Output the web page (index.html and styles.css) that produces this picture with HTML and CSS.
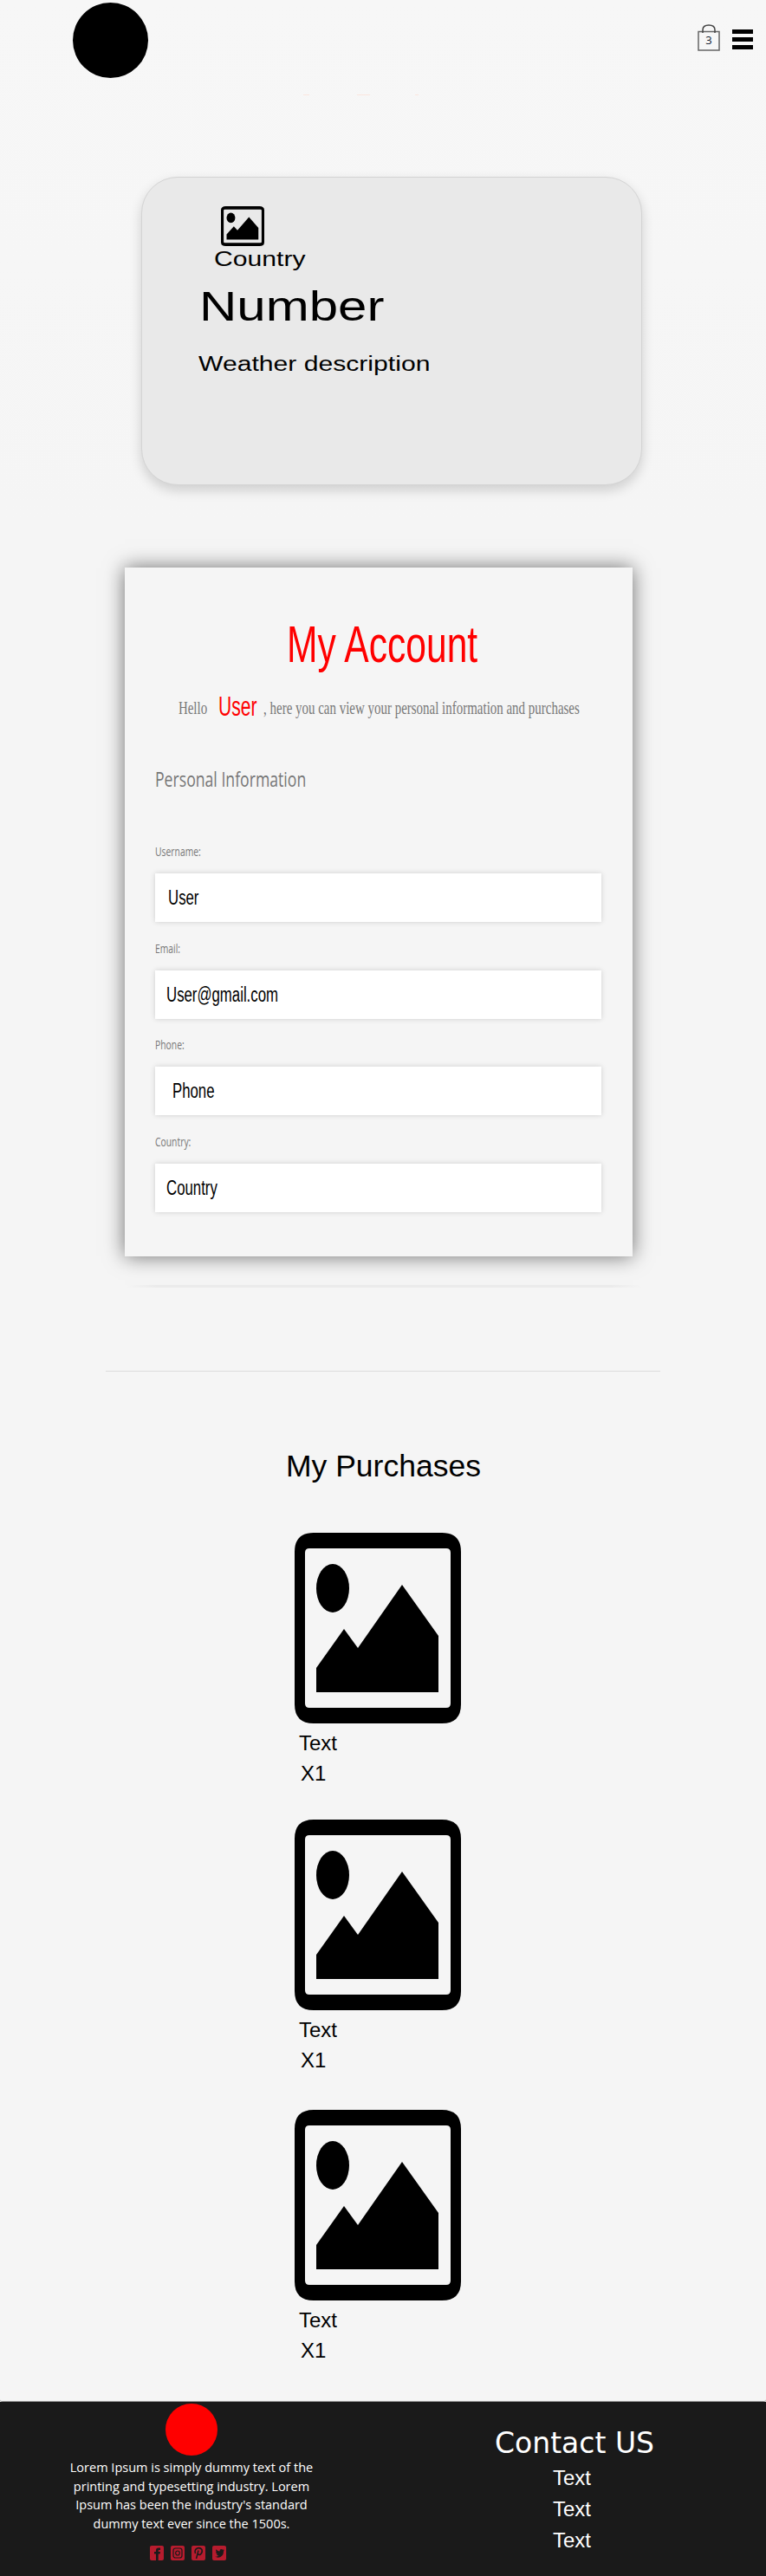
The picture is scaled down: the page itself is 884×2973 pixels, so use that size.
FILE: index.html
```html
<!DOCTYPE html>
<html lang="en">
<head>
<meta charset="utf-8">
<title>My Account</title>
<link rel="stylesheet" href="styles.css">
</head>
<body>
<svg class="defs" width="0" height="0" aria-hidden="true">
  <symbol id="pic" viewBox="0 0 192 220" preserveAspectRatio="none">
    <path fill-rule="evenodd" d="M22 0H170Q192 0 192 22V198Q192 220 170 220H22Q0 220 0 198V22Q0 0 22 0ZM17 18Q12 18 12 23V197Q12 202 17 202H175Q180 202 180 197V23Q180 18 175 18Z"/>
    <ellipse cx="44" cy="64" rx="19" ry="28"/>
    <path d="M25 184V156L57 111L73 133L124 60L166 119V184Z"/>
  </symbol>
</svg>
<div class="page">
  <header class="header">
    <div class="header-row">
      <div class="logo"></div>
      <div class="tools">
        <div class="bag">
          <svg class="bag-svg" viewBox="0 0 26 31"><path d="M1 8.500H25V30H1Z" fill="none" stroke="#666" stroke-width="1.500"/><path d="M6 10V6.500Q6 1 13 1T20 6.500V10" fill="none" stroke="#444" stroke-width="1.500"/></svg>
          <span class="bag-count">3</span>
        </div>
        <div class="burger"><i></i><i></i><i></i></div>
      </div>
    </div>
    <div class="marks"><i class="m1"></i><i class="m2"></i><i class="m3"></i></div>
  </header>

  <section class="weather">
    <svg class="weather-icon"><use href="#pic"/></svg>
    <div class="w-country"><span>Country</span></div>
    <div class="w-number"><span>Number</span></div>
    <div class="w-desc"><span>Weather description</span></div>
  </section>

  <section class="account">
    <h1 class="acc-title"><span>My Account</span></h1>
    <p class="acc-hello"><span class="hello-inner">Hello<b>User</b>, here you can view your personal information and purchases</span></p>
    <h2 class="acc-sub"><span>Personal Information</span></h2>
    <div class="field">
      <label class="f-label"><span>Username:</span></label>
      <div class="f-box f-user"><span>User</span></div>
    </div>
    <div class="field">
      <label class="f-label"><span>Email:</span></label>
      <div class="f-box f-email"><span>User@gmail.com</span></div>
    </div>
    <div class="field">
      <label class="f-label"><span>Phone:</span></label>
      <div class="f-box f-phone"><span>Phone</span></div>
    </div>
    <div class="field">
      <label class="f-label"><span>Country:</span></label>
      <div class="f-box f-email"><span>Country</span></div>
    </div>
  </section>
  <div class="band"></div>
  <hr class="rule">

  <section class="purchases">
    <h2 class="pur-title">My Purchases</h2>
    <article class="item">
      <svg class="item-pic"><use href="#pic"/></svg>
      <div class="item-name">Text</div>
      <div class="item-qty">X1</div>
    </article>
    <article class="item item-tall">
      <svg class="item-pic"><use href="#pic"/></svg>
      <div class="item-name">Text</div>
      <div class="item-qty">X1</div>
    </article>
    <article class="item">
      <svg class="item-pic"><use href="#pic"/></svg>
      <div class="item-name">Text</div>
      <div class="item-qty">X1</div>
    </article>
  </section>
</div>

<footer class="footer">
  <div class="foot-left">
    <div class="foot-logo"></div>
    <p class="foot-text"><span>Lorem Ipsum is simply dummy text of the<br>printing and typesetting industry. Lorem<br>Ipsum has been the industry's standard<br>dummy text ever since the 1500s.</span></p>
    <div class="social">
      <svg viewBox="0 0 16 17"><rect width="16" height="17" rx="2" fill="#b71c2e"/><path d="M7 17V9.500H5V7H7V5Q7 2.500 10 2.500H12V5H10.500Q9.700 5 9.700 5.800V7H12L11.600 9.500H9.700V17Z" fill="#1a1a1a"/></svg>
      <svg viewBox="0 0 16 17"><rect width="16" height="17" rx="2" fill="#b71c2e"/><rect x="3" y="3" width="10" height="11" rx="2.500" fill="none" stroke="#1a1a1a" stroke-width="1.200"/><ellipse cx="8" cy="8.500" rx="2.300" ry="2.500" fill="none" stroke="#1a1a1a" stroke-width="1.200"/></svg>
      <svg viewBox="0 0 16 17"><rect width="16" height="17" rx="2" fill="#b71c2e"/><path d="M4.500 9Q3 5 6.500 3Q10 1.800 12 4.500Q13 8 10.500 10Q8.500 11 7.600 9.500M8 5.500L5.500 15" fill="none" stroke="#1a1a1a" stroke-width="1.500"/></svg>
      <svg viewBox="0 0 16 17"><rect width="16" height="17" rx="2" fill="#b71c2e"/><path d="M3 12.500Q6 13 7.500 11.500Q5.500 11.500 5 10H6Q4 9 4 7.200L5 7.500Q3.500 6 4.500 4.200Q6.500 6.500 8.500 6.500Q8.300 4 10.500 4Q11.500 4 12 4.700L13.500 4.200L12.700 5.500L14 5.200L13 6.500Q13 11 9.500 13Q6 14.500 3 12.500Z" fill="#1a1a1a"/></svg>
    </div>
  </div>
  <div class="foot-right">
    <h3 class="foot-title">Contact US</h3>
    <div class="foot-link"><span>Text</span></div>
    <div class="foot-link"><span>Text</span></div>
    <div class="foot-link"><span>Text</span></div>
  </div>
</footer>
</body>
</html>
```
FILE: styles.css
```css
* { box-sizing: border-box; }
html, body { margin: 0; padding: 0; }
body { background: #f5f5f5; font-family: "Liberation Sans", Arial, sans-serif; color: #000; width: 884px; }
.defs { display: block; height: 0; }
.page { height: 2772px; overflow: hidden; background: linear-gradient(180deg, #f7f7f7, #f5f5f5 600px); border-radius: 0 0 3px 3px; border-bottom: 1px solid #999; }

.header { height: 204px; }
.header-row { height: 109px; padding: 3px 15px 0 84px; display: flex; justify-content: space-between; align-items: flex-start; }
.logo { width: 87px; height: 87px; border-radius: 50%; background: #000; }
.tools { display: flex; gap: 14px; margin-top: 25px; }
.bag { position: relative; width: 26px; height: 31px; }
.bag-svg { display: block; width: 26px; height: 31px; }
.bag-count { position: absolute; left: 0; right: 0; top: 9px; text-align: center; font: 13px/18px "Open Sans", sans-serif; color: #123; }
.burger { width: 24px; display: flex; flex-direction: column; gap: 4.500px; margin-top: 6px; }
.burger i { display: block; height: 4.500px; background: #000; }
.marks { display: flex; padding-left: 350px; }
.marks i { display: block; height: 1px; background: #fbe6df; }
.m1 { width: 7px; }
.m2 { width: 15px; margin-left: 55px; }
.m3 { width: 4px; margin-left: 52px; }

.weather { margin-left: 163px; width: 578px; height: 356px; border-radius: 42px; background: #e9e9e9; border: 1px solid #d4d4d4; box-shadow: 0 6px 14px rgba(0,0,0,.16); padding: 33px 0 0 91px; }
.weather-icon { display: block; width: 50px; height: 46px; }
.weather span, .acc-title span, .acc-sub span, .f-label span, .f-box span, .foot-text span, .foot-link span { display: inline-block; white-space: nowrap; }
.w-country { font-size: 23px; line-height: 26px; margin: 2px 0 0 -8px; }
.w-country span { transform: scaleX(1.31); transform-origin: left; }
.w-number { font-size: 48px; line-height: 52px; margin: 16px 0 0 -25px; }
.w-number span { transform: scaleX(1.25); transform-origin: left; }
.w-desc { font-size: 23px; line-height: 26px; margin: 27px 0 0 -26px; }
.w-desc span { transform: scaleX(1.31); transform-origin: left; }

.account { margin: 95px 0 0 144px; width: 586px; height: 795px; background: #f5f5f5; box-shadow: 0 0 22px rgba(0,0,0,.55); padding: 54px 35px 0; }
.acc-title { margin: 0 0 0 9px; font-weight: 400; font-size: 60px; line-height: 70px; color: #f00; text-align: center; }
.acc-title span { transform: scaleX(.71); }
.acc-hello { margin: 19px 0 0 -35px; width: 586px; text-align: center; font: 22px/36px "Liberation Serif", serif; color: #777; white-space: nowrap; height: 36px; display: flex; justify-content: center; }
.hello-inner { display: inline-block; transform: scaleX(.68); }
.hello-inner b { font: 400 31px/36px "Liberation Sans", sans-serif; color: #f00; margin: 0 11px 0 19px; vertical-align: -2px; }
.acc-sub { margin: 49px 0 0; font: 400 24px/32px "Open Sans", sans-serif; color: #777; }
.acc-sub span { transform: scaleX(.735); transform-origin: left; }
.field { width: 515px; }
.acc-sub + .field { margin-top: 58px; }
.f-label { display: block; font: 14px/20px "Open Sans", sans-serif; color: #777; margin-bottom: 15px; }
.f-label span { transform: scaleX(.74); transform-origin: left; }
.f-box { height: 56px; background: #fff; box-shadow: 0 0 6px rgba(0,0,0,.16); font-size: 23px; line-height: 56px; margin-bottom: 20.500px; }
.f-box span { transform: scaleX(.73); transform-origin: left; }
.f-user { padding-left: 15px; }
.f-email { padding-left: 12.500px; }
.f-phone { padding-left: 20px; }

.band { width: 596px; height: 3px; margin: 33px 0 0 145px; background: linear-gradient(90deg, #f5f5f5, #ebebeb 6%, #ebebeb 94%, #f5f5f5); }
.rule { width: 640px; height: 1px; margin: 96px 0 0 122px; border: 0; background: #dcdcdc; }

.purchases { padding-left: 340px; }
.pur-title { margin: 88px 0 0 -10px; font-weight: 400; font-size: 35.500px; line-height: 42px; width: 226px; white-space: nowrap; }
.item { height: 331px; }
.item-tall { height: 335px; }
.item-pic { display: block; width: 192px; height: 220px; }
.pur-title + .item { margin-top: 56px; }
.item-name { font-size: 24px; line-height: 28px; margin: 9px 0 0 5px; }
.item-qty { font-size: 24px; line-height: 28px; margin: 7px 0 0 7px; }

.footer { height: 201px; background: #1a1a1a; color: #fff; display: flex; }
.foot-left { width: 442px; display: flex; flex-direction: column; align-items: center; padding-top: 2px; }
.foot-logo { width: 60px; height: 60px; border-radius: 50%; background: #f00; }
.foot-text { margin: 3px 0 0; font: 14.500px/21.500px "Open Sans", sans-serif; text-align: center; }
.social { display: flex; gap: 8px; margin: 15px 8px 0 0; }
.social svg { display: block; width: 16px; height: 17px; }
.foot-right { width: 442px; text-align: center; padding-top: 28px; }
.foot-title { margin: 0 0 2px; font: 400 33px/40px "DejaVu Sans", sans-serif; }
.foot-link { font-size: 24px; line-height: 36px; padding-right: 6px; }
```
